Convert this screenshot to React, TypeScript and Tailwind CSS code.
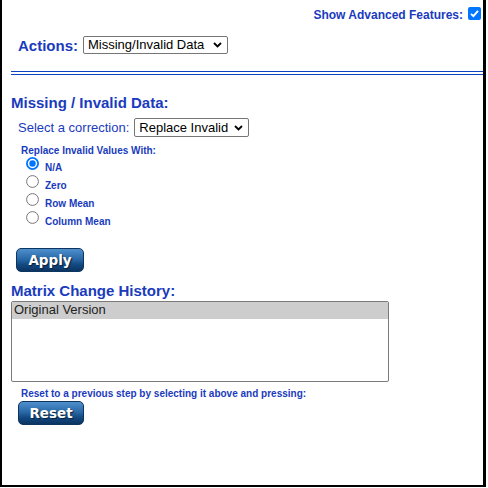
import React from "react";

const Chevron = () => (
  <svg width="9" height="6" viewBox="0 0 9 6" className="shrink-0">
    <polyline points="1,1 4.5,4.5 8,1" fill="none" stroke="#000" strokeWidth="1.8" />
  </svg>
);

const Checkbox = () => (
  <div className="w-[13px] h-[13px] rounded-[2px] bg-[#0075ff] flex items-center justify-center shrink-0">
    <svg width="11" height="11" viewBox="0 0 11 11">
      <polyline points="2,5.8 4.4,8.2 9,2.8" fill="none" stroke="#fff" strokeWidth="1.9" />
    </svg>
  </div>
);

const Radio = ({ checked }: { checked?: boolean }) => (
  <svg width="13" height="13" viewBox="0 0 13 13" className="shrink-0 mt-[1px]">
    {checked ? (
      <>
        <circle cx="6.5" cy="6.5" r="5.6" fill="#fff" stroke="#0075ff" strokeWidth="1.8" />
        <circle cx="6.5" cy="6.5" r="3.2" fill="#0075ff" />
      </>
    ) : (
      <circle cx="6.5" cy="6.5" r="5.9" fill="#fff" stroke="#767676" strokeWidth="1" />
    )}
  </svg>
);

const Button = ({ label, w }: { label: string; w: string }) => (
  <div
    className={`${w} h-[24px] rounded-[5px] border border-[#0d355f] bg-[linear-gradient(to_bottom,#4f8fcc_0%,#2a69a8_45%,#134a82_70%,#0b3462_100%)] flex items-center justify-center text-white font-bold text-[13.5px] font-['DejaVu_Sans',Verdana,sans-serif] [text-shadow:1px_1px_1px_#0a1f3a]`}
  >
    {label}
  </div>
);

const options = ["N/A", "Zero", "Row Mean", "Column Mean"];

export default function App() {
  return (
    <div className="w-[486px] h-[487px] border-l-2 border-r-[3px] border-b-2 border-black bg-white font-['Liberation_Sans',Arial,sans-serif] text-[#1a3bbd]">
      <div className="flex justify-end items-start pt-[7px] pr-[2px] gap-[5px]">
        <span className="mt-[1px] text-[12px] leading-[14px] font-bold">Show Advanced Features:</span>
        <Checkbox />
      </div>

      <div className="mt-[14px] h-[18px] flex items-center pl-[16px] gap-[5px]">
        <span className="text-[15px] leading-[17px] font-bold">Actions:</span>
        <div className="w-[145px] h-[18px] border border-[#767676] rounded-[2px] flex items-center justify-between pl-[4px] pr-[5px] text-black text-[13px] leading-[16px]">
          <span>Missing/Invalid Data</span>
          <Chevron />
        </div>
      </div>

      <div className="mt-[17px] ml-[9px] h-[4px] border-y border-[#0a44c2]" />

      <div className="mt-[19px] pl-[9px] text-[15px] leading-[17px] font-bold">Missing / Invalid Data:</div>

      <div className="mt-[7px] h-[19px] flex items-center pl-[16px] gap-[5px]">
        <span className="text-[13px] leading-[16px]">Select a correction:</span>
        <div className="w-[115px] h-[19px] border border-[#767676] rounded-[2px] flex items-center justify-between pl-[4px] pr-[5px] text-black text-[13px] leading-[16px]">
          <span>Replace Invalid</span>
          <Chevron />
        </div>
      </div>

      <div className="mt-[8px] pl-[19px] text-[10px] leading-[11px] font-bold">Replace Invalid Values With:</div>

      <div className="flex flex-col">
        {options.map((o, i) => (
          <div key={o} className="h-[18px] flex items-start pl-[24px] gap-[6px]">
            <Radio checked={i === 0} />
            <span className="mt-[6px] text-[10px] leading-[12px] font-bold">{o}</span>
          </div>
        ))}
      </div>

      <div className="mt-[20px] ml-[14px]">
        <Button label="Apply" w="w-[68px]" />
      </div>

      <div className="mt-[10px] pl-[9px] text-[15px] leading-[17px] font-bold">Matrix Change History:</div>

      <div className="mt-[2px] ml-[9px] w-[378px] h-[81px] border border-[#7a7a7a] rounded-[2px] overflow-hidden">
        <div className="h-[17px] bg-[#cdcdcd] pl-[2px] text-[13px] leading-[16px] text-[#222]">Original Version</div>
      </div>

      <div className="mt-[6px] pl-[19px] text-[10px] leading-[12px] font-bold">
        Reset to a previous step by selecting it above and pressing:
      </div>

      <div className="mt-[1px] ml-[16px]">
        <Button label="Reset" w="w-[66px]" />
      </div>
    </div>
  );
}
